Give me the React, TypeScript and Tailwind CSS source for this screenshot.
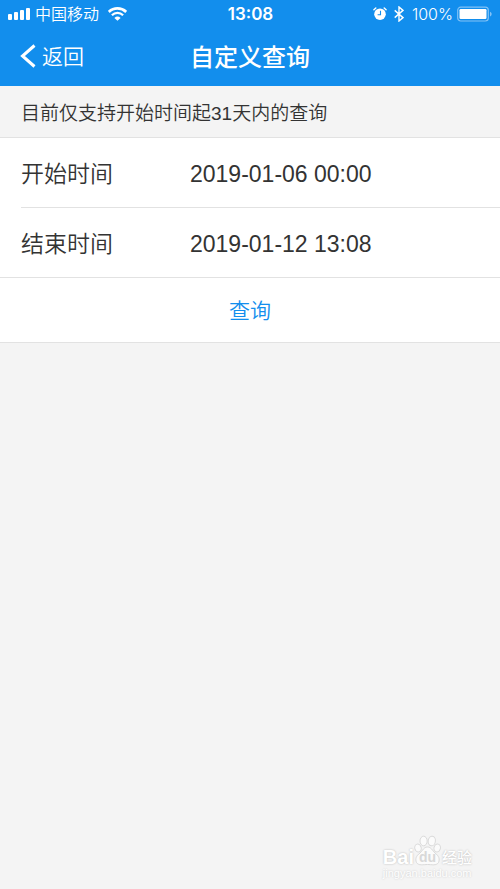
import React, { useState } from "react";

const sans = "font-['Liberation_Sans','Noto_Sans_CJK_SC',sans-serif]";
const cjk = "font-['Noto_Sans_CJK_SC',sans-serif]";

function StatusBar() {
  return (
    <div className="grid h-7 grid-cols-[1fr_auto_1fr] items-center pl-2 pr-[7px]">
      <div className="flex items-center">
        <svg className="h-3 w-[22px]" viewBox="0 0 22 12" fill="currentColor" aria-hidden="true">
          <rect x="0" y="6" width="4" height="6" rx="1" />
          <rect x="6" y="4" width="4" height="8" rx="1" />
          <rect x="12" y="2" width="4" height="10" rx="1" />
          <rect x="18" y="0" width="4" height="12" rx="1" />
        </svg>
        <span className={`${cjk} ml-[5px] pb-[2px] text-base leading-6 font-[350]`}>中国移动</span>
        <svg className="ml-[9px] h-[14px] w-[19px]" viewBox="0 0 19 14" aria-hidden="true">
          <path d="M0.8 4.9 A12.6 12.6 0 0 1 18.2 4.9" fill="none" stroke="currentColor" strokeWidth="2.7" />
          <path d="M3.9 8.2 A8 8 0 0 1 15.1 8.2" fill="none" stroke="currentColor" strokeWidth="2.3" />
          <path d="M6.4 10.9 A4.5 4.5 0 0 1 12.6 10.9 L9.5 13.8 Z" fill="currentColor" />
        </svg>
      </div>
      <time className="font-['Inter',sans-serif] text-[17px] leading-7 font-semibold">13:08</time>
      <div className="flex items-center justify-end">
        <svg className="h-[14px] w-[14px]" viewBox="0 0 14 14" aria-hidden="true">
          <circle cx="7" cy="7.2" r="5.8" fill="currentColor" />
          <path d="M0.9 2.8 L2.8 1 M13.1 2.8 L11.2 1" fill="none" stroke="currentColor" strokeWidth="1.4" strokeLinecap="round" />
          <path d="M7.5 3.8 V7.7 H4.6" fill="none" stroke="#128eed" strokeWidth="1.1" />
        </svg>
        <svg className="ml-[7px] h-4 w-[10px]" viewBox="0 0 10 16" aria-hidden="true">
          <path d="M0.7 4.4 L9 11.6 L5 15 V1 L9 4.4 L0.7 11.6" fill="none" stroke="currentColor" strokeWidth="1.4" />
        </svg>
        <span className="ml-2 font-['Inter',sans-serif] text-base leading-7 font-light">100%</span>
        <svg className="ml-1 h-4 w-9" viewBox="0 0 36 16" aria-hidden="true">
          <rect x="0.7" y="1.2" width="30.6" height="13.8" rx="3" fill="none" stroke="#82c2f6" strokeWidth="1.2" />
          <rect x="2.5" y="3" width="27" height="10" rx="1.2" fill="currentColor" />
          <path d="M33 5.8 C35.2 6.6 35.2 9.6 33 10.4 Z" fill="#82c2f6" />
        </svg>
      </div>
    </div>
  );
}

function TimeField({ id, label, initial }: { id: string; label: string; initial: string }) {
  const [value, setValue] = useState(initial);
  return (
    <div className="box-content flex h-[69px] items-center">
      <label htmlFor={id} className={`${cjk} w-[169px] shrink-0 pb-[2px] text-[23px] leading-8 font-[350]`}>
        {label}
      </label>
      <input
        id={id}
        type="text"
        value={value}
        onChange={(e) => setValue(e.target.value)}
        className={`${sans} min-w-0 flex-1 bg-transparent pt-[2px] text-[23px] leading-8 outline-none`}
      />
    </div>
  );
}

function Watermark() {
  return (
    <div className="absolute right-7 bottom-[10px] flex flex-col text-white" aria-hidden="true">
      <div className="flex h-8 items-end">
        <span className="font-['Liberation_Sans',sans-serif] text-xl leading-5 font-bold [text-shadow:0_0_2px_#b4b4b4]">Bai</span>
        <svg className="h-8 w-[27px]" viewBox="0 0 27 32">
          <g fill="#fbfbfb" stroke="#dadada" strokeWidth="1">
            <ellipse cx="4" cy="13" rx="3.2" ry="4" transform="rotate(-15 4 13)" />
            <ellipse cx="9.6" cy="6" rx="3.6" ry="4.8" />
            <ellipse cx="17.8" cy="6" rx="3.6" ry="4.8" transform="rotate(8 17.8 6)" />
            <ellipse cx="23.2" cy="13" rx="3.2" ry="4" transform="rotate(15 23.2 13)" />
            <path d="M13.5 12 C17 12 18.5 15.5 21 18 C25 21 26 24 24.5 27.5 C22.5 31 17.5 29.5 13.5 29.5 C9.5 29.5 4.5 31 2.5 27.5 C1 24 2 21 6 18 C8.5 15.5 10 12 13.5 12 Z" />
          </g>
          <text x="13.5" y="27" textAnchor="middle" fill="#d8d8d8" className="font-['Liberation_Sans',sans-serif] text-sm font-bold">du</text>
        </svg>
        <span className={`${cjk} ml-px text-[15px] leading-5 font-medium [text-shadow:0_0_2px_#b4b4b4]`}>经验</span>
      </div>
      <span className="font-['Liberation_Sans',sans-serif] text-[11px] leading-3 [text-shadow:0_0_2px_#c4c4c4]">jingyan.baidu.com</span>
    </div>
  );
}

export default function App() {
  return (
    <div lang="zh-CN" className="relative min-h-screen bg-[#f4f4f4] text-[#333333]">
      <header className="bg-[#128eed] text-white">
        <StatusBar />
        <nav className="grid h-[58px] grid-cols-[1fr_auto_1fr] items-center px-5 pb-[2px]">
          <button type="button" className="flex items-center justify-self-start">
            <svg className="h-6 w-4" viewBox="0 0 16 24" aria-hidden="true">
              <path d="M14.5 1.5 L2.5 12 L14.5 22.5" fill="none" stroke="currentColor" strokeWidth="3" />
            </svg>
            <span className={`${cjk} ml-[6px] pb-[2px] text-[21px] leading-8 font-[350]`}>返回</span>
          </button>
          <h1 className={`${cjk} text-2xl leading-8 font-medium`}>自定义查询</h1>
        </nav>
      </header>
      <main>
        <p className={`${sans} flex h-[51px] items-center pt-1 pl-[21px] text-[19px] leading-6`}>
          <span className="font-[350]">目前仅支持开始时间起</span>31
          <span className="font-[350]">天内的查询</span>
        </p>
        <form onSubmit={(e) => e.preventDefault()} className="border-y border-[#e2e2e2] bg-white">
          <div className="divide-y divide-[#e2e2e2] pl-[21px]">
            <TimeField id="start" label="开始时间" initial="2019-01-06 00:00" />
            <TimeField id="end" label="结束时间" initial="2019-01-12 13:08" />
          </div>
          <button type="submit" className={`${cjk} block h-[65px] w-full border-t border-[#e2e2e2] pb-[2px] text-[21px] leading-8 font-[350] text-[#128eed]`}>
            查询
          </button>
        </form>
      </main>
      <Watermark />
    </div>
  );
}
